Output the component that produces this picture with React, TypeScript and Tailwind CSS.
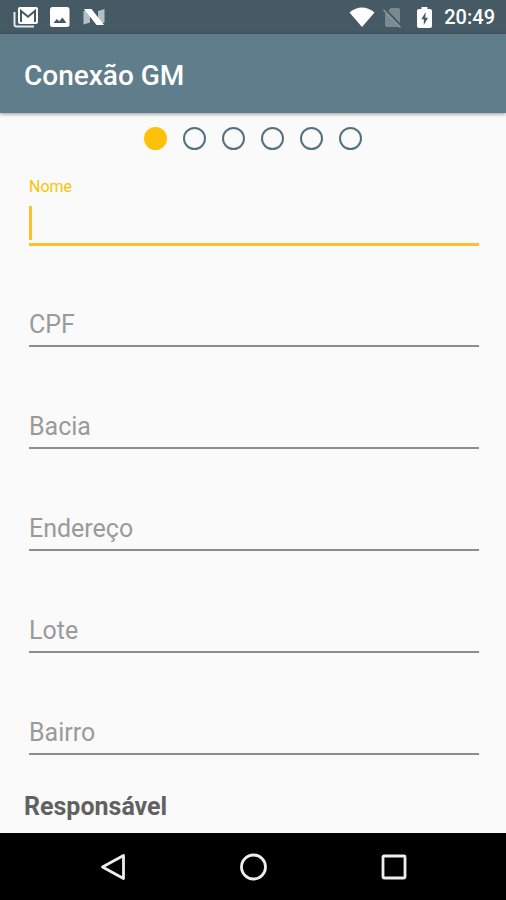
import { useState } from "react";

interface Field {
  id: string;
  label: string;
}

const FIELDS: Field[] = [
  { id: "nome", label: "Nome" },
  { id: "cpf", label: "CPF" },
  { id: "bacia", label: "Bacia" },
  { id: "endereco", label: "Endereço" },
  { id: "lote", label: "Lote" },
  { id: "bairro", label: "Bairro" },
];

const STEP_COUNT = 6;

function StatusBar() {
  return (
    <div className="flex h-[34px] flex-shrink-0 items-center justify-between bg-[#455a64] pl-[13px] pr-[11px] text-white">
      <div className="flex items-center">
        {/* Gmail */}
        <svg className="h-[22px] w-[26px]" viewBox="0 0 26 22" fill="none">
          <path d="M1.500 6v12.500q0 2 2 2H21" stroke="#e4e9eb" strokeWidth="2" />
          <rect x="5" y="1" width="20" height="17" rx="2" fill="#fff" />
          <path d="M8 16V5L15 10.800L22 5v11" stroke="#455a64" strokeWidth="2" />
        </svg>
        {/* Picture */}
        <svg className="ml-[11px] h-5 w-5" viewBox="0 0 20 20">
          <rect width="19.500" height="20" rx="2.500" fill="#fff" />
          <path d="M3.500 16l3.300-4 2.400 2.200 3.300-3.700 3.900 5.500z" fill="#455a64" />
        </svg>
        {/* Android N */}
        <svg className="ml-[13px] h-[18px] w-[22px]" viewBox="0 0 22 18">
          <path d="M0.500 3L7 1v13.500L0.500 16.500z" fill="#b4bfc3" />
          <path d="M15 3L21.500 1v13.500L15 17z" fill="#b4bfc3" />
          <path d="M1 1h7.500L21 17h-7.500z" fill="#fff" />
        </svg>
      </div>
      <div className="flex items-center">
        <svg className="h-5 w-[26px]" viewBox="0 0 26 20">
          <path d="M0.500 5.500Q13-4.500 25.500 5.500L13 20z" fill="#fff" />
        </svg>
        {/* No SIM */}
        <svg className="ml-2 h-[21px] w-[19px]" viewBox="0 0 19 21">
          <path d="M8 1h7q2 0 2 2v15.500q0 1.500-1.500 1.500H4q-2 0-2-2V7z" fill="#7b8a91" />
          <path d="M1.500 2l17 18" stroke="#455a64" strokeWidth="3" />
          <path d="M0.500 3l17 17.500" stroke="#8f9ca2" strokeWidth="1.500" />
        </svg>
        <svg className="ml-[15px] h-[21px] w-[15px]" viewBox="0 0 15 21">
          <path d="M4.500 0h6v2H13q2 0 2 2v15q0 2-2 2H2q-2 0-2-2V4q0-2 2-2h2.500z" fill="#fff" />
          <path d="M8.700 5L4.300 12.300h2.500V18l4.200-7.300H8.300z" fill="#455a64" />
        </svg>
        <span className="ml-3 text-[20px] font-medium leading-6">20:49</span>
      </div>
    </div>
  );
}

function AppBar() {
  return (
    <header className="z-10 flex h-[79px] flex-shrink-0 items-center bg-[#607d8b] px-6 pt-1 shadow-[0_1px_4px_rgba(0,0,0,0.4)]">
      <h1 className="text-[28px] font-medium leading-8 text-white">Conexão GM</h1>
    </header>
  );
}

function Steps({ current }: { current: number }) {
  return (
    <div className="flex justify-center gap-4">
      {Array.from({ length: STEP_COUNT }, (_, i) => (
        <span
          key={i}
          className={`h-[23px] w-[23px] rounded-full ${
            i === current ? "bg-[#ffc107]" : "border-2 border-[#54717f]"
          }`}
        />
      ))}
    </div>
  );
}

interface TextFieldProps {
  field: Field;
  value: string;
  focused: boolean;
  onFocus: () => void;
  onChange: (value: string) => void;
}

function TextField({ field, value, focused, onFocus, onChange }: TextFieldProps) {
  const floating = focused || value !== "";
  return (
    <div className="relative flex h-[70px] flex-col justify-end">
      {/* The label sits in the input until the field is focused or filled */}
      <label
        htmlFor={field.id}
        className={`pointer-events-none absolute left-0 ${
          floating ? "top-0 text-base leading-[22px]" : "bottom-[7px] text-[25px] leading-8"
        } ${focused ? "text-[#ffc107]" : "text-[#9a9a9a]"}`}
      >
        {field.label}
      </label>
      {focused && value === "" && (
        <span className="pointer-events-none absolute bottom-[6px] left-0 h-[34px] w-[3px] bg-[#fbc02d]" />
      )}
      <input
        id={field.id}
        type="text"
        autoComplete="off"
        value={value}
        onFocus={onFocus}
        onChange={(e) => onChange(e.target.value)}
        className={`h-[46px] w-full bg-transparent text-[25px] text-[#212121] outline-none ${
          value === "" ? "caret-transparent" : "caret-[#ffc107]"
        } ${focused ? "border-b-3 border-[#fbc02d]" : "mb-px border-b-2 border-[#8c8c8c]"}`}
      />
    </div>
  );
}

function NavBar() {
  return (
    <nav className="flex h-[67px] flex-shrink-0 items-center justify-center gap-[100px] bg-black">
      <button type="button" aria-label="Voltar" className="flex h-10 w-10 items-center justify-center">
        <svg className="h-7 w-7" viewBox="0 0 28 28" fill="none" stroke="#eee" strokeWidth="2.800" strokeLinejoin="round">
          <path d="M24.500 2.500v23L3.500 14z" />
        </svg>
      </button>
      <button type="button" aria-label="Início" className="flex h-10 w-10 items-center justify-center">
        <svg className="h-7 w-7" viewBox="0 0 28 28" fill="none" stroke="#eee" strokeWidth="2.800">
          <circle cx="14.500" cy="14" r="12" />
        </svg>
      </button>
      <button type="button" aria-label="Recentes" className="flex h-10 w-10 items-center justify-center">
        <svg className="h-7 w-7" viewBox="0 0 28 28" fill="none" stroke="#eee" strokeWidth="2.800">
          <rect x="4" y="3" width="22" height="22" rx="1" />
        </svg>
      </button>
    </nav>
  );
}

export default function App() {
  const [values, setValues] = useState<Record<string, string>>({});
  const [focusedId, setFocusedId] = useState("nome");

  return (
    <div className="flex min-h-screen flex-col bg-[#fafafa] font-[Roboto,sans-serif]">
      <StatusBar />
      <AppBar />
      <main className="flex-1 px-6 pt-[14px]">
        <Steps current={0} />
        <form className="mt-[26px] flex flex-col gap-8 pl-[5px] pr-[3px]">
          {FIELDS.map((f) => (
            <TextField
              key={f.id}
              field={f}
              value={values[f.id] ?? ""}
              focused={focusedId === f.id}
              onFocus={() => setFocusedId(f.id)}
              onChange={(v) => setValues({ ...values, [f.id]: v })}
            />
          ))}
        </form>
        <h2 className="mt-[35px] text-[25px] font-bold leading-8 text-[#616161]">Responsável</h2>
      </main>
      <NavBar />
    </div>
  );
}
